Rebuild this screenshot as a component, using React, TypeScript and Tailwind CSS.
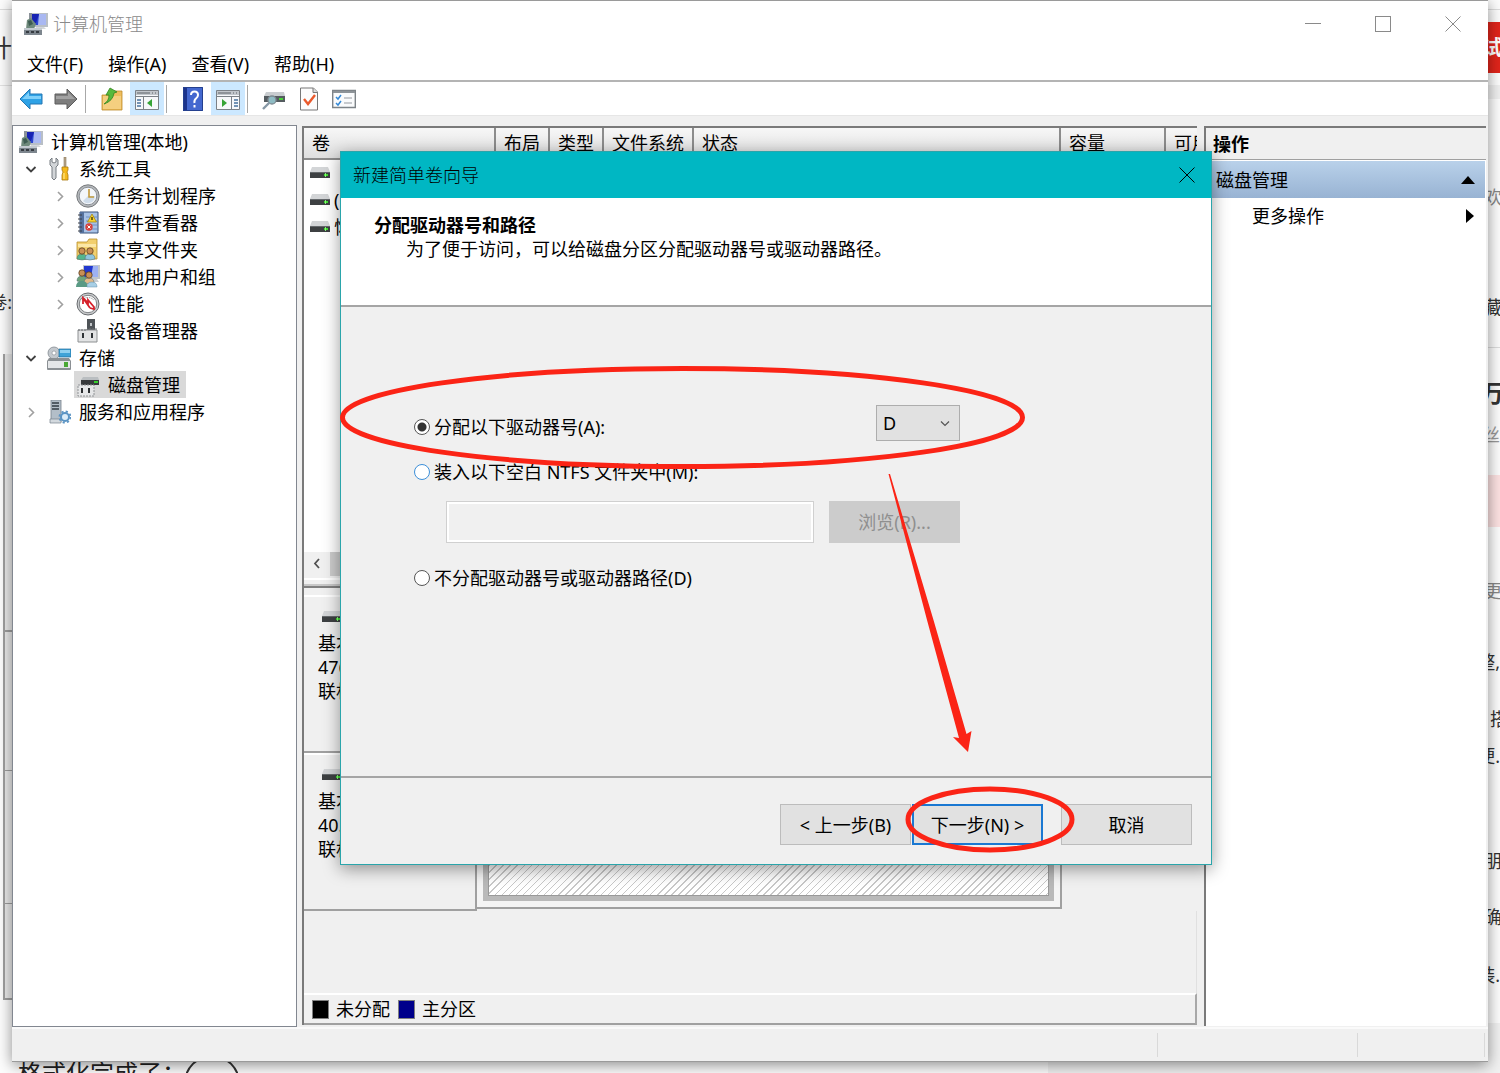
import { useState, type ReactNode } from 'react';
import clsx from 'clsx';

/* ---------- icons ---------- */

function ComputerIcon() {
  return (
    <svg viewBox="0 0 24 24" className="w-6 h-6 shrink-0" aria-hidden="true">
      <path d="M6 1h18v14H9z" fill="#b9bfc6" />
      <path d="M5 1h3v13H5z" fill="#8b9299" />
      <path d="M8 2h14v11H8z" fill="#2a45cf" />
      <path d="M15 2h7v11h-8z" fill="#a9b8f2" />
      <path d="M8 2h7l-3 9H8z" fill="#1723b4" />
      <path d="M12 15h8l2 2H11z" fill="#d4d7da" />
      <path d="M3 8l4-2 5 6-2 5H2z" fill="#6f8a7c" />
      <path d="M4 9l3-1 2 4-4 2z" fill="#3e5c52" />
      <path d="M0 16h18v7H0z" fill="#7d868e" />
      <path d="M0 16h18v2H0z" fill="#c3cad0" />
      <path d="M2 19h3v2H2zM7 19h3v2H7zM12 19h3v2h-3z" fill="#363c42" />
    </svg>
  );
}

function ToolsIcon() {
  return (
    <svg viewBox="0 0 24 24" className="w-6 h-6 shrink-0" aria-hidden="true">
      <path d="M5 1v4l2 1 2-1V1l2 2v5l-2 2v11l-2 2-2-2V10L3 8V3z" fill="#d2d5d8" stroke="#777c82" />
      <path d="M17 0h2v11h-2z" fill="#b8a68a" stroke="#8a7a5c" strokeWidth=".6" />
      <path d="M15 10h6v3l-1 2 1 3v5h-6v-5l1-3-1-2z" fill="#f5b91c" stroke="#a97a0c" strokeWidth=".8" />
      <path d="M17 16v6" stroke="#fff0a0" />
    </svg>
  );
}

function ClockIcon() {
  return (
    <svg viewBox="0 0 24 24" className="w-6 h-6 shrink-0" aria-hidden="true">
      <circle cx="12" cy="12" r="11.2" fill="#b4b7ba" stroke="#777a7d" />
      <circle cx="12" cy="12" r="8.8" fill="#f3f6fa" stroke="#8c9197" />
      <path d="M12 12h7a7 7 0 0 1-12 5z" fill="#cfdcea" />
      <path d="M13 5v8h5" stroke="#c49a3c" strokeWidth="1.6" fill="none" />
    </svg>
  );
}

function EventIcon() {
  return (
    <svg viewBox="0 0 24 24" className="w-6 h-6 shrink-0" aria-hidden="true">
      <path d="M4 1h18v21H4z" fill="#a8c2e6" stroke="#36507a" />
      <path d="M4 1h4v21H4z" fill="#54719e" />
      <path d="M2 4h4M2 8h4M2 12h4M2 16h4M2 20h4" stroke="#3c4148" />
      <path d="M10 6h11M10 10h11M10 14h11M10 18h11" stroke="#5f83bb" strokeWidth=".8" />
      <path d="M16 3l4.500 8h-9z" fill="#f7d12f" stroke="#9f8207" strokeWidth=".7" />
      <path d="M16 6v3" stroke="#332b00" strokeWidth="1.300" />
      <circle cx="13" cy="16" r="3.700" fill="#d7433d" />
      <path d="M11.500 14.500l3 3m0-3l-3 3" stroke="#fff" />
    </svg>
  );
}

function Person({ x, y, fill }: { x: number; y: number; fill: string }) {
  return (
    <g>
      <path d={`M${x - 5} ${y + 8}q0-5 5-5t5 5q-5 2-10 0z`} fill={fill} stroke="#4c6b70" strokeWidth=".5" />
      <circle cx={x} cy={y} r="3.200" fill="#c98f55" stroke="#4c3218" strokeWidth=".7" />
    </g>
  );
}

function SharedIcon() {
  return (
    <svg viewBox="0 0 24 24" className="w-6 h-6 shrink-0" aria-hidden="true">
      <path d="M1 4h10l2-3h8v20H1z" fill="#f2cf6d" stroke="#b98f2c" strokeWidth=".8" />
      <path d="M2 6h18v3H2z" fill="#fbe7a6" />
      <Person x={6} y={13} fill="#54b58d" />
      <Person x={14} y={13} fill="#8fc4de" />
    </svg>
  );
}

function UsersIcon() {
  return (
    <svg viewBox="0 0 24 24" className="w-6 h-6 shrink-0" aria-hidden="true">
      <path d="M7 0h17v14H7z" fill="#c1c6cb" />
      <path d="M8 1h14v11H8z" fill="#2138cf" />
      <path d="M17 1h5v11h-7z" fill="#9db1f3" />
      <path d="M14 14h7l2 3H12z" fill="#c8ccd0" />
      <Person x={6} y={8} fill="#6ea37a" />
      <Person x={13} y={10} fill="#e1b98a" />
      <path d="M0 22q0-6 6-6t5 6z" fill="#5a9a85" />
      <path d="M11 22q0-5 5-5t5 5z" fill="#a8cfe6" stroke="#6492ad" strokeWidth=".5" />
    </svg>
  );
}

function PerfIcon() {
  return (
    <svg viewBox="0 0 24 24" className="w-6 h-6 shrink-0" aria-hidden="true">
      <circle cx="12" cy="12" r="11" fill="#c9cbcd" stroke="#696c6f" />
      <circle cx="12" cy="12" r="8.700" fill="#fff" stroke="#7f8285" />
      <path d="M6 8q6-5 12 0" stroke="#8d9093" fill="none" strokeDasharray="1.500 1" />
      <path d="M7 12V6l5 5V8l6 7v2l-4-1M7 6l7 10" stroke="#d6202a" strokeWidth="1.800" fill="none" />
    </svg>
  );
}

function DeviceIcon() {
  return (
    <svg viewBox="0 0 24 24" className="w-6 h-6 shrink-0" aria-hidden="true">
      <path d="M11 0h8v12h-8z" fill="#4e5357" />
      <path d="M14 4h2v3h-2z" fill="#c0c4c7" />
      <path d="M2 11h19v12H2z" fill="#e2e3e4" stroke="#8d9092" />
      <path d="M6 14h2v5H6zM15 14h2v5h-2z" fill="#2f3336" />
      <path d="M2 11h9v-1h10" stroke="#6c7073" fill="none" strokeDasharray="2 1" />
    </svg>
  );
}

function StorageIcon() {
  return (
    <svg viewBox="0 0 24 24" className="w-6 h-6 shrink-0" aria-hidden="true">
      <circle cx="7" cy="7" r="6" fill="#c3c8cd" stroke="#838a90" strokeWidth=".8" />
      <circle cx="7" cy="7" r="2" fill="#fff" stroke="#838a90" strokeWidth=".6" />
      <path d="M12 3h12v8H12z" fill="#3fa3d8" stroke="#1c6c9b" strokeWidth=".7" />
      <path d="M13 4h10v3H13z" fill="#8fd0f0" />
      <path d="M2 12h20l2 3v8q0 1-1 1H1q-1 0-1-1v-8z" fill="#8b9094" />
      <path d="M1 15h22v7H1z" fill="#e4e6e8" />
      <path d="M17 16h4v5h-4z" fill="#4aa834" />
    </svg>
  );
}

function DiskMgmtIcon() {
  return (
    <svg viewBox="0 0 24 24" className="w-6 h-6 shrink-0" aria-hidden="true">
      <path d="M7 4h15l1 3H5z" fill="#babec1" />
      <path d="M5 7h18v5H5z" fill="#36393b" />
      <path d="M18 8h4v2h-4z" fill="#35d02b" />
      <path d="M2 12h16v11H2z" fill="#e6e7e8" stroke="#909396" strokeDasharray="2 1" />
      <path d="M5 15h2v5H5zM12 15h2v5h-2z" fill="#2b2e30" />
    </svg>
  );
}

function ServicesIcon() {
  return (
    <svg viewBox="0 0 24 24" className="w-6 h-6 shrink-0" aria-hidden="true">
      <path d="M4 0h10v22H4z" fill="#b3bec8" stroke="#76828c" strokeWidth=".8" />
      <path d="M5 3h7M5 6h7M5 9h7" stroke="#333c44" strokeWidth="1.300" />
      <path d="M3 19h11v4H3z" fill="#d3d9de" stroke="#76828c" strokeWidth=".7" />
      <circle cx="18" cy="17" r="4" fill="#dcecf8" stroke="#5b94c4" strokeWidth="2" />
      <circle cx="18" cy="17" r="5.600" fill="none" stroke="#5b94c4" strokeWidth="1.800" strokeDasharray="2.200 2.200" />
    </svg>
  );
}

function DriveIcon() {
  return (
    <svg viewBox="0 0 20 12" className="w-5 h-3 shrink-0" aria-hidden="true">
      <path d="M2 0h16l2 5H0z" fill="#d3d5d7" />
      <path d="M0 5h20v6H0z" fill="#3d4042" />
      <path d="M0 5h20v1H0z" fill="#65696c" />
      <path d="M14 7h4v2h-4z" fill="#3fe02f" />
      <path d="M15 6h1v4h-1z" fill="#8bf57c" />
    </svg>
  );
}

function ArrowIcon({ back }: { back?: boolean }) {
  return back ? (
    <svg viewBox="0 0 24 24" className="w-6 h-6" aria-hidden="true">
      <path d="M1 12L11 2v5h12v10H11v5z" fill="#2ea2e6" stroke="#2477b3" strokeLinejoin="round" />
      <path d="M3 12l7-7v4h12v3z" fill="#7fd0fa" />
    </svg>
  ) : (
    <svg viewBox="0 0 24 24" className="w-6 h-6" aria-hidden="true">
      <path d="M23 12L13 2v5H1v10h12v5z" fill="#7e7e7e" stroke="#5c5c5c" strokeLinejoin="round" />
      <path d="M21 12l-7-7v4H2v3z" fill="#a2a2a2" />
    </svg>
  );
}

function FolderUpIcon() {
  return (
    <svg viewBox="0 0 24 24" className="w-6 h-6" aria-hidden="true">
      <path d="M2 8h9l3-4h8v19H2z" fill="#eebd5c" stroke="#bd8a2b" strokeWidth=".8" />
      <path d="M3 9h18v13H3z" fill="#f5cf7f" />
      <path d="M4 17q5-3 5-9H6l4-7 7 4-3 1q-1 8-10 11z" fill="#58b93c" stroke="#33861f" strokeWidth=".8" />
    </svg>
  );
}

function PaneIcon({ right }: { right?: boolean }) {
  return (
    <svg viewBox="0 0 24 24" className="w-6 h-6" aria-hidden="true">
      <path d="M.5 3.500h23v19H.5z" fill="#f6f8fa" stroke="#7b8187" />
      <path d="M1 4h22v4H1z" fill="#c1c6cb" />
      <path d="M2 6h13M17 6h1M20 6h1" stroke="#5a6067" />
      <path d="M1 9.500h22" stroke="#7b8187" />
      {right ? (
        <>
          <path d="M15.500 10v12" stroke="#7b8187" />
          <path d="M18 13h4M18 16h4M18 19h4" stroke="#47719f" strokeWidth="1.300" />
          <path d="M6 12v8l5-4z" fill="#36a436" />
        </>
      ) : (
        <>
          <path d="M8.500 10v12" stroke="#7b8187" />
          <path d="M2 13h4M2 16h4M2 19h4" stroke="#47719f" strokeWidth="1.300" />
          <path d="M17 12v8l-5-4z" fill="#36a436" />
        </>
      )}
    </svg>
  );
}

function HelpIcon() {
  return (
    <svg viewBox="0 0 24 24" className="w-6 h-6" aria-hidden="true">
      <path d="M2 0h20v24H2z" fill="#4468cf" />
      <path d="M2 0h4v24H2z" fill="#1c348c" />
      <path d="M2.500.5h19v23h-19z" fill="none" stroke="#24408f" />
      <path d="M10 8q0-3.500 3.500-3.500T17 8q0 2-2 3.500T13.500 16" stroke="#fff" strokeWidth="2" fill="none" />
      <path d="M12.500 18h2v2.500h-2z" fill="#fff" />
    </svg>
  );
}

function DriveSearchIcon() {
  return (
    <svg viewBox="0 0 24 24" className="w-6 h-6" aria-hidden="true">
      <path d="M4 5h18l1 4H2z" fill="#c9cdd0" />
      <path d="M2 9h21v6H2z" fill="#555c60" />
      <path d="M17 11h4v2h-4z" fill="#4bd33c" />
      <circle cx="10" cy="13" r="4" fill="#8fbcc4" stroke="#7f8b93" strokeWidth="1.300" />
      <path d="M7 16l-6 6" stroke="#8698a6" strokeWidth="2.400" />
    </svg>
  );
}

function CheckPageIcon() {
  return (
    <svg viewBox="0 0 24 24" className="w-6 h-6" aria-hidden="true">
      <path d="M3.500 1h13l4 4v18h-17z" fill="#fcfcfc" stroke="#777" />
      <path d="M16 1v4.500h4.500" fill="#ddd" stroke="#777" />
      <path d="M7 12l4 5 7-9" stroke="#ea5a2c" strokeWidth="2.400" fill="none" />
    </svg>
  );
}

function ListIcon() {
  return (
    <svg viewBox="0 0 24 24" className="w-6 h-6" aria-hidden="true">
      <path d="M.7 3.500h22.600v17H.7z" fill="#fafbfc" stroke="#7d8388" strokeWidth="1.400" />
      <path d="M1 4h22v2H1z" fill="#8d9398" />
      <path d="M4 10l2 2 3-4M4 16l2 2 3-4" stroke="#3388d6" strokeWidth="1.500" fill="none" />
      <path d="M12 11h8M12 16h8" stroke="#b7bbbf" strokeWidth="1.300" />
    </svg>
  );
}

function CrossIcon() {
  return (
    <svg viewBox="0 0 16 16" className="w-4 h-4" aria-hidden="true">
      <path d="M.5.5l15 15m0-15l-15 15" stroke="currentColor" fill="none" />
    </svg>
  );
}

function Chevron({ open }: { open?: boolean }) {
  return (
    <svg viewBox="0 0 16 16" className="w-4 h-4" aria-hidden="true">
      {open ? (
        <path d="M3.500 6L8 10.500 12.500 6" stroke="#404040" strokeWidth="1.800" fill="none" />
      ) : (
        <path d="M6 4l4.500 4.500L6 13" stroke="#a0a0a0" strokeWidth="1.600" fill="none" />
      )}
    </svg>
  );
}

/* ---------- data ---------- */

interface TreeNode {
  label: string;
  icon: ReactNode;
  level: 0 | 1 | 2;
  state?: 'open' | 'closed';
  selected?: boolean;
}

const tree: TreeNode[] = [
  { label: '计算机管理(本地)', icon: <ComputerIcon />, level: 0 },
  { label: '系统工具', icon: <ToolsIcon />, level: 1, state: 'open' },
  { label: '任务计划程序', icon: <ClockIcon />, level: 2, state: 'closed' },
  { label: '事件查看器', icon: <EventIcon />, level: 2, state: 'closed' },
  { label: '共享文件夹', icon: <SharedIcon />, level: 2, state: 'closed' },
  { label: '本地用户和组', icon: <UsersIcon />, level: 2, state: 'closed' },
  { label: '性能', icon: <PerfIcon />, level: 2, state: 'closed' },
  { label: '设备管理器', icon: <DeviceIcon />, level: 2 },
  { label: '存储', icon: <StorageIcon />, level: 1, state: 'open' },
  { label: '磁盘管理', icon: <DiskMgmtIcon />, level: 2, selected: true },
  { label: '服务和应用程序', icon: <ServicesIcon />, level: 1, state: 'closed' },
];

const columns = [
  { label: '卷', width: 'w-[191px]' },
  { label: '布局', width: 'w-[54px]' },
  { label: '类型', width: 'w-[54px]' },
  { label: '文件系统', width: 'w-[90px]' },
  { label: '状态', width: 'w-auto' },
  { label: '容量', width: 'w-[105px]' },
  { label: '可用', width: 'w-8' },
];

const volumes = ['', '(C:)', '恢复'];

const disks = [
  { name: '基本', size: '476.94 GB', status: '联机' },
  { name: '基本', size: '40.00 GB', status: '联机' },
];

/* ---------- main window ---------- */

function ToolButton({ label, active, children }: { label: string; active?: boolean; children: ReactNode }) {
  return (
    <button
      aria-label={label}
      className={clsx('w-[34px] h-full flex items-center justify-center', active && 'bg-[#cce8ff]')}
    >
      {children}
    </button>
  );
}

function ToolSeparator() {
  return <span className="w-px h-7 ml-px mr-2 bg-[#a8a8a8]" />;
}

function TreePane() {
  return (
    <nav className="w-[285px] shrink-0 bg-white border border-[#828790] pt-0.5">
      <ul>
        {tree.map((node) => (
          <li
            key={node.label}
            className={clsx('h-[27px] flex items-center gap-1.5', {
              'pl-1': node.level === 0,
              'pl-2.5': node.level === 1,
              'pl-[39px]': node.level === 2,
            })}
          >
            {node.level > 0 &&
              (node.state ? (
                <button aria-label={node.label} className="w-4 h-4">
                  <Chevron open={node.state === 'open'} />
                </button>
              ) : (
                <span className="w-4" />
              ))}
            <span className={clsx('h-full flex items-center gap-2 pl-0.5 pr-1.5', node.selected && 'bg-[#d9d9d9]')}>
              {node.icon}
              <span>{node.label}</span>
            </span>
          </li>
        ))}
      </ul>
    </nav>
  );
}

function VolumeTable() {
  return (
    <div className="h-[424px] shrink-0 bg-white overflow-hidden">
      <table className="w-full table-fixed border-collapse">
        <thead>
          <tr className="h-[31px] bg-linear-to-b from-[#f7f7f7] to-[#dedede]">
            {columns.map((col) => (
              <th
                key={col.label}
                className={clsx(
                  col.width,
                  'pl-2 text-left font-normal whitespace-nowrap overflow-hidden border-r-2 border-b-2 border-[#8c8c8c] last:border-r-0'
                )}
              >
                {col.label}
              </th>
            ))}
          </tr>
        </thead>
        <tbody>
          {volumes.map((name, i) => (
            <tr key={i} className="h-[27px]">
              <td colSpan={columns.length} className="pl-1.5">
                <span className="flex items-center gap-1">
                  <DriveIcon />
                  {name}
                </span>
              </td>
            </tr>
          ))}
        </tbody>
      </table>
    </div>
  );
}

function DiskRow({ disk }: { disk: (typeof disks)[number] }) {
  return (
    <div className="h-[158px] flex">
      <div className="w-[173px] shrink-0 border-t-2 border-t-white border-r-2 border-b-2 border-r-[#a0a0a0] border-b-[#a0a0a0] pt-3.5 pl-3.5">
        <span className="block pl-1">
          <DriveIcon />
        </span>
        <p className="pt-2">{disk.name}</p>
        <p>{disk.size}</p>
        <p>{disk.status}</p>
      </div>
      <div className="w-[585px] shrink-0 mb-0.5 bg-[#f4f4f4] border-r-2 border-b-2 border-[#a0a0a0] p-1.5">
        <div className="h-full border-[5px] border-t-0 border-[#b9b9b9]">
          <div className="h-full border border-[#999] bg-[repeating-linear-gradient(135deg,#fff_0,#fff_4px,#c8c8c8_4px,#c8c8c8_5px)]" />
        </div>
      </div>
    </div>
  );
}

function DiskPane() {
  return (
    <main className="flex-1 min-w-0 mt-px mb-0.5 ml-[5px] mr-[7px] flex flex-col border-t-2 border-l-2 border-[#7a7a7a]">
      <VolumeTable />
      <div className="h-6 shrink-0 flex">
        <button aria-label="scroll left" className="w-[26px] flex items-center justify-center bg-[#f0f0f0]">
          <svg viewBox="0 0 16 16" className="w-4 h-4" aria-hidden="true">
            <path d="M10 3L6 7.500 10 12" stroke="#505050" strokeWidth="1.800" fill="none" />
          </svg>
        </button>
        <span className="flex-1 bg-[#cdcdcd]" />
      </div>
      <div className="h-3 shrink-0 border-b-2 border-[#808080]">
        <div className="h-2 mt-0.5 border-y-2 border-t-white border-b-[#c8c8c8]" />
      </div>
      <div className="shrink-0 pt-[7px] leading-6">
        {disks.map((disk, i) => (
          <DiskRow key={i} disk={disk} />
        ))}
      </div>
      <div className="flex-1 border-r border-[#e0e0e0]" />
      <div className="h-8 shrink-0 flex items-center border-2 border-l-0 border-t-white border-r-[#a8a8a8] border-b-[#a0a0a0] pl-2">
        <span className="w-[17px] h-[19px] bg-black border border-[#808080]" />
        <span className="pl-[7px] pr-2">未分配</span>
        <span className="w-[17px] h-[19px] bg-[#00008b] border border-[#808080]" />
        <span className="pl-[7px]">主分区</span>
      </div>
    </main>
  );
}

function ActionPane() {
  return (
    <aside className="w-[282px] shrink-0 mt-px mb-px mr-0.5 bg-white border-t-2 border-l-2 border-[#7a7a7a]">
      <h2 className="h-8 flex items-center pl-[7px] font-bold bg-[#f0f0f0] border-b border-[#a0a0a0]">操作</h2>
      <div className="h-[37px] mt-px mr-px flex items-center justify-between px-2.5 bg-linear-to-b from-[#b9d1ea] to-[#98b3d3]">
        <span>磁盘管理</span>
        <svg viewBox="0 0 14 8" className="w-3.5 h-2" aria-hidden="true">
          <path d="M7 0l7 8H0z" fill="#000" />
        </svg>
      </div>
      <button className="w-full h-9 flex items-center justify-between pl-[46px] pr-3">
        <span>更多操作</span>
        <svg viewBox="0 0 8 14" className="w-2 h-3.5" aria-hidden="true">
          <path d="M0 0l8 7-8 7z" fill="#000" />
        </svg>
      </button>
    </aside>
  );
}

function MainWindow() {
  return (
    <div className="relative h-full flex flex-col bg-[#f0f0f0] border-t border-b border-[#9a9a9a] shadow-[0_3px_14px_rgba(0,0,0,0.45)]">
      <header className="h-[45px] shrink-0 flex items-center justify-between bg-white pl-3 pr-[27px] text-[#8a8a8a]">
        <div className="flex items-center gap-[5px] font-light">
          <ComputerIcon />
          <h1>计算机管理</h1>
        </div>
        <div className="flex items-center gap-[54px]">
          <button aria-label="最小化" className="w-4 h-4 flex items-center">
            <span className="w-4 h-px bg-[#8a8a8a]" />
          </button>
          <button aria-label="最大化" className="w-4 h-4 border border-[#8a8a8a]" />
          <button aria-label="关闭" className="w-4 h-4">
            <CrossIcon />
          </button>
        </div>
      </header>
      <div className="h-9 shrink-0 flex items-center gap-[25px] bg-white pt-px pl-[15px] border-b-2 border-[#b4b4b4]">
        {['文件(F)', '操作(A)', '查看(V)', '帮助(H)'].map((item) => (
          <button key={item}>{item}</button>
        ))}
      </div>
      <div className="h-[34px] shrink-0 flex items-center gap-px bg-white pl-0.5 border-b border-[#e6e6e6]">
        <ToolButton label="后退"><ArrowIcon back /></ToolButton>
        <ToolButton label="前进"><ArrowIcon /></ToolButton>
        <ToolSeparator />
        <ToolButton label="上一级"><FolderUpIcon /></ToolButton>
        <ToolButton label="显示控制台树" active><PaneIcon /></ToolButton>
        <ToolSeparator />
        <ToolButton label="帮助"><HelpIcon /></ToolButton>
        <ToolButton label="显示操作窗格" active><PaneIcon right /></ToolButton>
        <ToolSeparator />
        <ToolButton label="重新扫描"><DriveSearchIcon /></ToolButton>
        <ToolButton label="属性"><CheckPageIcon /></ToolButton>
        <ToolButton label="列表"><ListIcon /></ToolButton>
      </div>
      <div className="flex-1 min-h-0 flex pt-[9px]">
        <TreePane />
        <DiskPane />
        <ActionPane />
      </div>
      <footer className="h-[34px] shrink-0 flex justify-end border-t-2 border-[#fafafa] py-1 pr-[3px]">
        <span className="w-[200px] border-l border-[#d9d9d9]" />
        <span className="w-32 border-x border-[#d9d9d9]" />
      </footer>
    </div>
  );
}

/* ---------- wizard ---------- */

function Radio({
  id,
  label,
  checked,
  accent,
  onChange,
}: {
  id: string;
  label: string;
  checked: boolean;
  accent?: boolean;
  onChange: () => void;
}) {
  return (
    <div className="flex items-center gap-1">
      <input
        type="radio"
        name="assign"
        id={id}
        checked={checked}
        onChange={onChange}
        className={clsx(
          'appearance-none w-4 h-4 rounded-full border bg-white checked:bg-[radial-gradient(circle,#333_0,#333_4px,#fff_5px)]',
          accent ? 'border-[#3c8fd9]' : 'border-[#555]'
        )}
      />
      <label htmlFor={id}>{label}</label>
    </div>
  );
}

function WizardDialog() {
  const [mode, setMode] = useState('letter');

  return (
    <div
      role="dialog"
      aria-labelledby="wizard-title"
      className="absolute left-[340px] top-[151px] w-[872px] h-[714px] flex flex-col bg-[#f0f0f0] border border-[#2aa5ab] shadow-[0_4px_16px_rgba(0,0,0,0.4)]"
    >
      <header className="h-[46px] shrink-0 flex items-center justify-between pl-3 pr-4 bg-[#00b7c3]">
        <h2 id="wizard-title" className="font-light">新建简单卷向导</h2>
        <button aria-label="关闭" className="w-4 h-4">
          <CrossIcon />
        </button>
      </header>
      <div className="h-[109px] shrink-0 bg-white border-b-2 border-[#a5a5a5] pt-[15px] pl-[33px] leading-6">
        <h3 className="font-bold">分配驱动器号和路径</h3>
        <p className="pl-8">为了便于访问，可以给磁盘分区分配驱动器号或驱动器路径。</p>
      </div>
      <form className="flex-1 flex flex-col pl-[73px] pr-[251px] pt-[98px]" onSubmit={(e) => e.preventDefault()}>
        <div className="h-9 flex items-start justify-between">
          <div className="pt-2.5">
            <Radio id="letter" label="分配以下驱动器号(A):" checked={mode === 'letter'} onChange={() => setMode('letter')} />
          </div>
          <div className="relative">
            <select
              aria-label="驱动器号"
              defaultValue="D"
              className="appearance-none w-[84px] h-9 pl-1.5 bg-[#e1e1e1] border border-[#adadad] rounded-none"
            >
              <option>D</option>
              <option>E</option>
            </select>
            <svg viewBox="0 0 10 6" className="absolute right-2.5 top-4 w-2.5 h-1.5 pointer-events-none" aria-hidden="true">
              <path d="M1 .5l4 4 4-4" stroke="#555" strokeWidth="1.200" fill="none" />
            </svg>
          </div>
        </div>
        <div className="pt-[19px]">
          <Radio id="mount" label="装入以下空白 NTFS 文件夹中(M):" accent checked={mode === 'mount'} onChange={() => setMode('mount')} />
        </div>
        <div className="flex justify-between pt-[17px] pl-8">
          <input
            aria-label="文件夹路径"
            disabled
            className="w-[368px] h-[42px] bg-[#f0f0f0] border border-[#d0d0d0] shadow-[inset_0_0_0_2px_#fff]"
          />
          <button disabled className="w-[131px] h-[42px] bg-[#cccccc] text-[#8f8f8f]">
            浏览(R)...
          </button>
        </div>
        <div className="pt-[23px]">
          <Radio id="none" label="不分配驱动器号或驱动器路径(D)" checked={mode === 'none'} onChange={() => setMode('none')} />
        </div>
      </form>
      <footer className="h-[88px] shrink-0 flex justify-end gap-px pt-[26px] pr-[19px] border-t-2 border-[#a5a5a5]">
        <button className="w-[131px] h-[41px] bg-[#e1e1e1] border border-[#bcbcbc]">&lt; 上一步(B)</button>
        <button className="w-[131px] h-[41px] bg-[#e1e1e1] border-2 border-[#1a78d2]">下一步(N) &gt;</button>
        <button className="w-[131px] h-[41px] ml-[17px] bg-[#e1e1e1] border border-[#bcbcbc]">取消</button>
      </footer>
    </div>
  );
}

/* Hand-drawn red marks lying over the windows */
function Annotations() {
  return (
    <svg className="absolute inset-0 w-full h-full pointer-events-none" aria-hidden="true">
      <ellipse cx="682.500" cy="417.500" rx="340" ry="49" fill="none" stroke="#fb2416" strokeWidth="5" />
      <ellipse cx="990" cy="819.500" rx="82" ry="30.500" fill="none" stroke="#fb2416" strokeWidth="5" />
      <path d="M888.500 474h1.500l43.500 146 33 114 5-3-3.500 21-15-15 6 1-32-118z" fill="#fb2416" />
    </svg>
  );
}

/* ---------- page behind the windows ---------- */

function Backdrop() {
  return (
    <div className="absolute inset-0 flex flex-col bg-[#fdfdfd] text-[#333]">
      <div className="flex-1 min-h-0 flex justify-between">
        <div className="w-3 overflow-hidden flex flex-col">
          <div className="h-[10px] border-b border-[#ddd]" />
          <div className="h-[76px] flex items-center justify-end border-b border-[#e3e3e3] text-2xl">计</div>
          <div className="h-[268px] flex items-end justify-end pb-10 whitespace-nowrap">卷:</div>
          <div className="h-[646px] ml-[3px] bg-[#ececec] border-l-2 border-b-2 border-[#a0a0a0] flex flex-col">
            <div className="h-[278px] border-b-2 border-[#a0a0a0]" />
            <div className="h-[139px] border-b border-[#a0a0a0]" />
            <div className="h-[133px] border-b border-[#a0a0a0]" />
          </div>
        </div>
        <div className="w-4 overflow-hidden flex flex-col whitespace-nowrap">
          <div className="h-[10px] shrink-0 border-b border-[#ddd]" />
          <div className="h-[51px] shrink-0 mt-3 bg-[#e1251b] text-white text-xl font-bold flex items-center justify-center">试</div>
          <div className="h-[26px] shrink-0 border-b-[14px] border-[#f0f0f0]" />
          <div className="h-[110px] shrink-0 flex items-end text-[#888]">欢</div>
          <div className="h-[110px] shrink-0 flex items-end">藏</div>
          <div className="h-[62px] shrink-0 flex items-end border-t border-[#ddd] mt-7 text-2xl font-bold justify-center">万</div>
          <div className="h-[52px] shrink-0 flex items-center text-[#999] justify-end">丝</div>
          <div className="h-[52px] shrink-0 mt-3.5 bg-[#fde2e2]" />
          <div className="h-[76px] shrink-0 flex items-end text-[#888]">更</div>
          <div className="h-[71px] shrink-0 flex items-end justify-end">整,</div>
          <div className="h-[57px] shrink-0 flex items-end pl-1.5">搭</div>
          <div className="h-[37px] shrink-0 flex items-end justify-end">便.</div>
          <div className="h-[105px] shrink-0 flex items-end">朋</div>
          <div className="h-14 shrink-0 flex items-end">确</div>
          <div className="h-[58px] shrink-0 flex items-end justify-end">装.</div>
        </div>
      </div>
      <div className="h-[50px] shrink-0 flex justify-between">
        <p className="pl-[18px] pt-[34px] h-full overflow-hidden text-2xl flex text-[#222]">
          格式化完成了：
          <svg viewBox="0 0 52 52" className="w-[52px] h-[52px] shrink-0" aria-hidden="true">
            <circle cx="26" cy="26" r="27" fill="#fff" stroke="#333" strokeWidth="2" />
          </svg>
        </p>
        <div className="w-[452px] bg-[#f1f1f1]" />
      </div>
    </div>
  );
}

export default function App() {
  return (
    <div
      lang="zh-CN"
      className="relative h-screen overflow-hidden px-3 pb-[11px] text-[18px] leading-6 text-black font-['Noto_Sans','Noto_Sans_CJK_SC',sans-serif]"
    >
      <Backdrop />
      <MainWindow />
      <WizardDialog />
      <Annotations />
    </div>
  );
}
